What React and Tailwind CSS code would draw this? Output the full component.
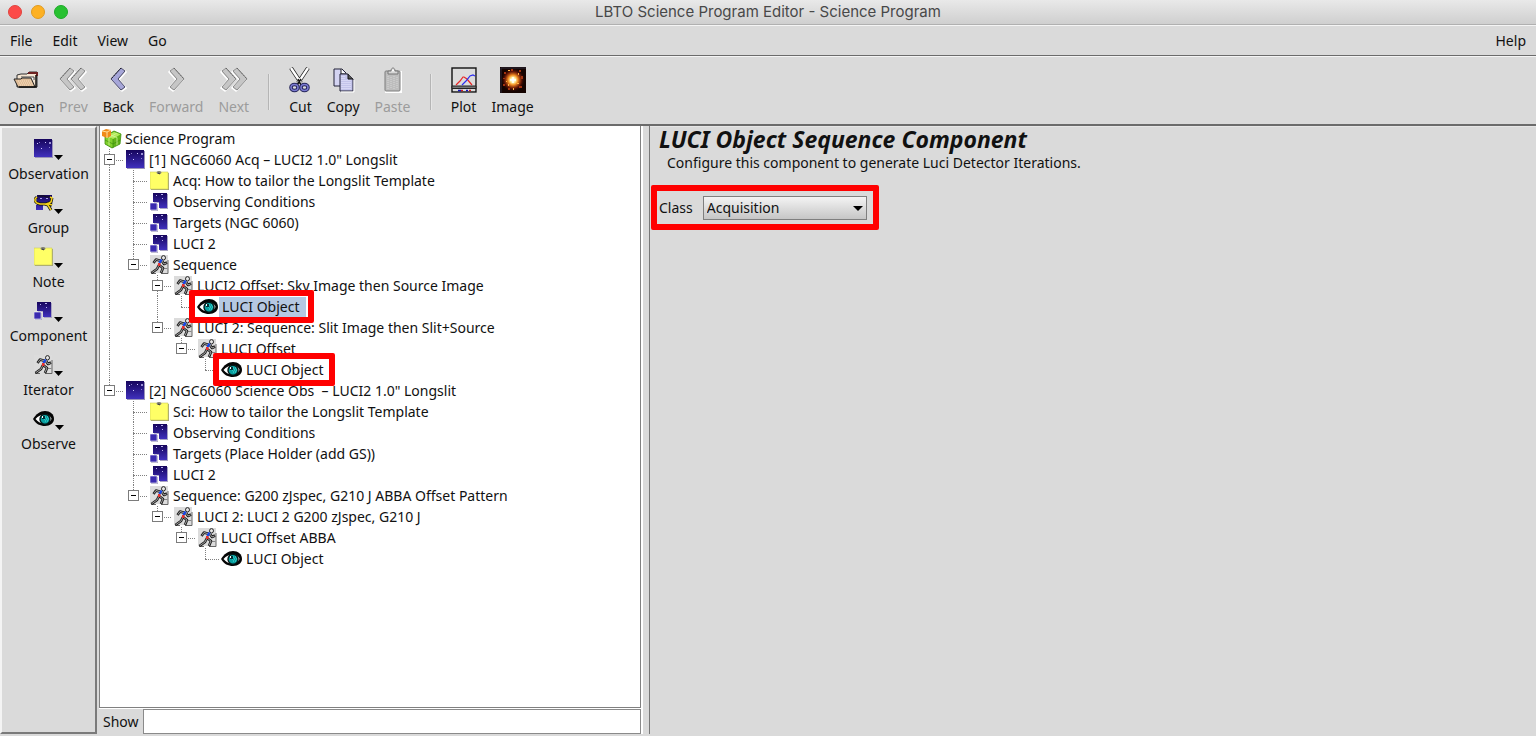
import { useState } from 'react';

const ICON_STARS = (
  <g fill="#cfc8ff">
    <rect x="3" y="4" width="1" height="1" />
    <rect x="7" y="9" width="1" height="1" />
    <rect x="11" y="3" width="1" height="1" />
    <rect x="15" y="3" width="2" height="2" opacity=".7" />
    <rect x="5" y="3" width="1" height="1" opacity=".6" />
    <rect x="15" y="8" width="1" height="1" opacity=".6" />
  </g>
);

function NavyGradient({ id }) {
  return (
    <defs>
      <linearGradient id={id} x1="0" y1="0" x2="0" y2="1">
        <stop offset="0" stopColor="#16055c" />
        <stop offset="1" stopColor="#4030bd" />
      </linearGradient>
    </defs>
  );
}

function ObservationIcon() {
  return (
    <svg width="20" height="20" viewBox="0 0 20 20" aria-hidden="true">
      <NavyGradient id="obs" />
      <rect x="1" y="1" width="18" height="18" fill="#9a94b8" />
      <rect x="0" y="0" width="18" height="18" fill="url(#obs)" />
      {ICON_STARS}
    </svg>
  );
}

function ComponentIcon() {
  return (
    <svg width="20" height="20" viewBox="0 0 20 20" aria-hidden="true">
      <NavyGradient id="cmp" />
      <path d="M4 2h14v15h-8v-6H4z" fill="#a9a4c4" />
      <path d="M3 1h14v15H9v-6H3z" fill="url(#cmp)" />
      <rect x="1" y="12" width="7" height="7" fill="#a9a4c4" />
      <rect x="0" y="11" width="7" height="7" fill="#3a2ab0" stroke="#fff" strokeWidth=".6" />
      <g fill="#b9b2f0">
        <rect x="6" y="3" width="1" height="1" />
        <rect x="11" y="2" width="2" height="1" />
        <rect x="12" y="6" width="1" height="1" />
      </g>
    </svg>
  );
}

function GroupIcon() {
  return (
    <svg width="20" height="20" viewBox="0 0 20 20" aria-hidden="true">
      <NavyGradient id="grp" />
      <path d="M3 2h15v10H3zM2 12h7v5H2z" fill="url(#grp)" />
      <path d="M3 4L1 6v2l2 2 3 1h6l3-1 2-1 1-4M11 11l3 1 3 5M10 11h5l3 1" fill="none" stroke="#111" strokeWidth="3" />
      <path d="M4 3h6l2 1h5" fill="none" stroke="#111" strokeWidth="1" />
      <path d="M3 4L1 6v2l2 2 3 1h6l3-1 2-1 1-4-2-1M11 11l3 1 3 5M10 11h5l3 1" fill="none" stroke="#f5d21c" strokeWidth="1.5" />
      <rect x="6" y="5" width="2" height="1" fill="#aaa3ea" />
      <rect x="12" y="5" width="2" height="1" fill="#aaa3ea" />
    </svg>
  );
}

function NoteIcon() {
  return (
    <svg width="20" height="20" viewBox="0 0 20 20" aria-hidden="true">
      <path d="M1 2h18v17H1z" fill="#a3a37c" />
      <path d="M0 1h18v17H0z" fill="#ffff66" stroke="#c9c95a" strokeWidth=".6" />
      <ellipse cx="9" cy="1.500" rx="2.500" ry="1.500" fill="#7d7d74" />
      <path d="M8 2l2 1" stroke="#333" />
    </svg>
  );
}

function RunnerIcon() {
  return (
    <svg width="20" height="20" viewBox="0 0 20 20" aria-hidden="true">
      <rect x="0" y="0" width="18" height="18" fill="#dcdcdc" />
      <path d="M18 5v13.500H11M1 18.500h5" fill="none" stroke="#666" />
      <path d="M13 13.500h4.500" stroke="#888" />
      <path d="M11 6L6 4.500 3.500 8M12 6l2 3 3-1.500M9 10l4 3-2 5M9 10l-2 4-5.500 4" fill="none" stroke="#1c1c1c" strokeWidth="2.600" strokeLinejoin="round" />
      <path d="M11 6L6 4.500 4 7.500M12 6l2 3 2.500-1M9 10l4 3-2 4.500M9 10l-2 4-5 3.500" fill="none" stroke="#d8d8d8" strokeWidth=".7" strokeLinejoin="round" />
      <ellipse cx="13.500" cy="2.800" rx="2" ry="2.200" fill="#e8e8e8" stroke="#222" />
      <path d="M11.500 4.500L9.500 8" stroke="#1646e8" strokeWidth="2.400" />
      <rect x="8" y="8" width="2.500" height="3" fill="#e5302c" />
    </svg>
  );
}

function EyeIcon() {
  return (
    <svg width="22" height="20" viewBox="0 0 22 20" aria-hidden="true">
      <path d="M0 10C3 5 7 2 12 2c5 0 9 3 9 8 0 4-4 7-9 7-5 0-9-2-12-7z" fill="#050505" />
      <path d="M2.500 10C5 7 8 5.500 12 5.500c3 0 6 2 6.500 4.500-1.500 3-3.500 4.500-6.500 4.500-4 0-7-1.500-9.500-4.500z" fill="#fff" />
      <circle cx="12" cy="10.200" r="5" fill="#08a0a0" stroke="#031818" strokeWidth="1.400" />
      <path d="M12 8h4M11 10h5M12 12h4" stroke="#4fe0dc" strokeDasharray="1 1" />
      <rect x="9" y="7" width="3" height="3" fill="#032f34" />
      <rect x="9" y="7" width="1" height="2" fill="#fff" />
    </svg>
  );
}

function ProgramIcon() {
  return (
    <svg width="20" height="20" viewBox="0 0 20 20" aria-hidden="true">
      <path d="M3 7l9-5 7 3-1 10-8 4-7-4z" fill="#62b519" />
      <path d="M3 7l9-4 7 2-8 5z" fill="#b4ea5c" />
      <path d="M11 10v9l-8-4V7z" fill="#80d02b" />
      <path d="M3 11l8 4 7-4M11 10v9" fill="none" stroke="#3b8c0d" strokeWidth=".7" />
      <path d="M7 5.500l8 3v8M15 4L7 8.500v8" fill="none" stroke="#d3f59a" strokeWidth=".8" />
      <path d="M3 7l9-5 7 3-1 10-8 4-7-4z" fill="none" stroke="#3f8f10" strokeWidth=".8" />
      <path d="M0 2l4-2 5 1v6L5 9 0 7z" fill="#f08a18" />
      <path d="M0 2l5 1 4-2M5 3v6" fill="none" stroke="#ffdf9a" />
    </svg>
  );
}

function FolderIcon() {
  return (
    <svg width="26" height="26" viewBox="0 0 26 26" aria-hidden="true">
      <path d="M8 7h6l2-2h8v15H4V8z" fill="#f4e5d2" stroke="#333" />
      <path d="M15 6h9v3" fill="none" stroke="#6e2222" strokeWidth="2" />
      <path d="M8 10h13v3" fill="#fff" stroke="#444" />
      <path d="M1 12h7l1-1h9l4 9H5z" fill="#dfbd98" stroke="#222" />
      <path d="M5 14h13M6 16h13M7 18h13" stroke="#f8dfc2" strokeDasharray="1 1" />
      <path d="M23 8v12H6" fill="none" stroke="#111" strokeWidth="1.500" />
    </svg>
  );
}

function Chevrons({ double, right, active }) {
  const shape = 'M1 12L11 1l4 3-7 8 7 8-4 3z';
  const width = double ? 28 : 17;
  return (
    <svg width={width} height="26" viewBox={`0 0 ${width} 26`} aria-hidden="true">
      <g transform={right ? `translate(${width} 0) scale(-1 1)` : undefined}>
        {(double ? [11, 0] : [0]).map((x) => (
          <g key={x} transform={`translate(${x} 0)`}>
            <path d={shape} transform="translate(1 1)" fill="none" stroke="#fff" strokeWidth="1.500" />
            <path d={shape} fill={active ? '#a6a6d8' : '#c6c6c6'} stroke={active ? '#4a4a66' : '#8b8b8b'} />
            <path d="M11 1L1 12" stroke={active ? '#1c1c2a' : '#666'} strokeDasharray="2 1" />
          </g>
        ))}
      </g>
    </svg>
  );
}

function CutIcon() {
  return (
    <svg width="22" height="26" viewBox="0 0 22 26" aria-hidden="true">
      <path d="M2 1l10 15M19 1L9 16" stroke="#222" strokeWidth="4" />
      <path d="M2 1l10 15M19 1L9 16" stroke="#fff" strokeWidth="2.400" />
      <path d="M9 12l3 6M12 12l-4 6" stroke="#111" strokeWidth="1.500" />
      <ellipse cx="5.500" cy="20.500" rx="3.500" ry="3" fill="#ddd" stroke="#26265a" strokeWidth="3.600" />
      <ellipse cx="15.500" cy="20.500" rx="3.500" ry="3" fill="#ddd" stroke="#26265a" strokeWidth="3.600" />
      <ellipse cx="5.500" cy="20.500" rx="3.500" ry="3" fill="none" stroke="#7a7ad0" strokeWidth="1.600" />
      <ellipse cx="15.500" cy="20.500" rx="3.500" ry="3" fill="none" stroke="#7a7ad0" strokeWidth="1.600" />
    </svg>
  );
}

function CopyIcon() {
  return (
    <svg width="24" height="26" viewBox="0 0 24 26" aria-hidden="true">
      <path d="M3 2h8l4 4v13H3z" fill="#d4d4f2" stroke="#222238" />
      <path d="M10 2v5h5" fill="#fff" stroke="#222" />
      <path d="M9 7h8l5 5v12H9z" fill="#c4c4ea" stroke="#222238" />
      <path d="M11 9v13M13 9v13M15 13v9M17 13v9M19 13v9" stroke="#e9e9ff" strokeDasharray="1 1" />
      <path d="M17 7v5h5" fill="#555" stroke="#111" />
      <path d="M23 13v12H10" fill="none" stroke="#fff" />
    </svg>
  );
}

function PasteIcon() {
  return (
    <svg width="20" height="26" viewBox="0 0 20 26" aria-hidden="true">
      <path d="M3 5h15v20H3z" fill="none" stroke="#fff" strokeWidth="2" />
      <rect x="2" y="4" width="15" height="20" rx="1" fill="#bdbdbd" stroke="#7d7d7d" />
      <path d="M5 9v13M8 10v12M11 9v13M14 10v12" stroke="#d7d7d7" strokeDasharray="1 1" />
      <path d="M5 7V4h3c0-4 4-4 4 0h3v3z" fill="#d6d6d6" stroke="#777" />
      <circle cx="10" cy="3.500" r="1" fill="#fff" />
    </svg>
  );
}

function PlotIcon() {
  return (
    <svg width="26" height="28" viewBox="0 0 26 28" aria-hidden="true">
      <path d="M25.500 2v24.500H1" fill="none" stroke="#fff" />
      <rect x="1" y="2" width="24" height="24" fill="#dcdcdc" stroke="#111" strokeWidth="1.400" />
      <path d="M1 20h24v2.500H1z" fill="#777" stroke="#222" />
      <path d="M5 19l4-4 3-4h1l3 2 5 6" fill="none" stroke="#e92525" strokeWidth="1.200" />
      <path d="M11 19l4-4 4-5 3-1 2 1" fill="none" stroke="#2d2df0" strokeWidth="1.200" />
      <path d="M7 24.500h3M15 24.500h2" stroke="#1515c0" strokeWidth="1.500" />
      <path d="M10 24.500h2M18 24.500h2" stroke="#d02020" strokeWidth="1.500" />
    </svg>
  );
}

function ImageIcon() {
  return (
    <svg width="28" height="28" viewBox="0 0 28 28" aria-hidden="true">
      <defs>
        <radialGradient id="glow">
          <stop offset="0" stopColor="#fff" />
          <stop offset=".22" stopColor="#fff3a0" />
          <stop offset=".42" stopColor="#f08a20" />
          <stop offset=".7" stopColor="#7c1c08" stopOpacity=".8" />
          <stop offset="1" stopColor="#1c0400" stopOpacity="0" />
        </radialGradient>
      </defs>
      <rect x="1" y="1" width="26" height="26" fill="#150300" />
      <circle cx="14" cy="14" r="12" fill="url(#glow)" />
      <g fill="#a3330f">
        <rect x="5" y="6" width="2" height="2" /><rect x="20" y="4" width="2" height="2" />
        <rect x="22" y="10" width="2" height="3" /><rect x="4" y="18" width="2" height="2" />
        <rect x="20" y="20" width="3" height="2" /><rect x="9" y="22" width="2" height="2" />
        <rect x="4" y="12" width="2" height="1" /><rect x="12" y="3" width="2" height="2" />
      </g>
      <g fill="#ffb347">
        <rect x="9" y="4" width="2" height="1" /><rect x="19" y="7" width="1" height="2" />
        <rect x="7" y="15" width="1" height="1" /><rect x="14" y="22" width="1" height="2" />
        <rect x="18" y="17" width="2" height="1" /><rect x="9" y="18" width="1" height="2" />
      </g>
      <path d="M14 11v6M11 14h6" stroke="#fff" strokeWidth="1.500" />
      <path d="M2 27V2h25" fill="none" stroke="#2b2b3a" />
    </svg>
  );
}

const ICONS = {
  program: ProgramIcon,
  observation: ObservationIcon,
  group: GroupIcon,
  note: NoteIcon,
  component: ComponentIcon,
  iterator: RunnerIcon,
  observe: EyeIcon,
};

const PROGRAM = {
  icon: 'program',
  label: 'Science Program',
  children: [
    {
      icon: 'observation',
      label: '[1] NGC6060 Acq – LUCI2 1.0" Longslit',
      children: [
        { icon: 'note', label: 'Acq: How to tailor the Longslit Template' },
        { icon: 'component', label: 'Observing Conditions' },
        { icon: 'component', label: 'Targets (NGC 6060)' },
        { icon: 'component', label: 'LUCI 2' },
        {
          icon: 'iterator',
          label: 'Sequence',
          children: [
            {
              icon: 'iterator',
              label: 'LUCI2 Offset: Sky Image then Source Image',
              children: [{ icon: 'observe', label: 'LUCI Object', selected: true, marked: true }],
            },
            {
              icon: 'iterator',
              label: 'LUCI 2: Sequence: Slit Image then Slit+Source',
              children: [
                {
                  icon: 'iterator',
                  label: 'LUCI Offset',
                  children: [{ icon: 'observe', label: 'LUCI Object', marked: true }],
                },
              ],
            },
          ],
        },
      ],
    },
    {
      icon: 'observation',
      label: '[2] NGC6060 Science Obs  – LUCI2 1.0" Longslit',
      children: [
        { icon: 'note', label: 'Sci: How to tailor the Longslit Template' },
        { icon: 'component', label: 'Observing Conditions' },
        { icon: 'component', label: 'Targets (Place Holder (add GS))' },
        { icon: 'component', label: 'LUCI 2' },
        {
          icon: 'iterator',
          label: 'Sequence: G200 zJspec, G210 J ABBA Offset Pattern',
          children: [
            {
              icon: 'iterator',
              label: 'LUCI 2: LUCI 2 G200 zJspec, G210 J',
              children: [
                {
                  icon: 'iterator',
                  label: 'LUCI Offset ABBA',
                  children: [{ icon: 'observe', label: 'LUCI Object' }],
                },
              ],
            },
          ],
        },
      ],
    },
  ],
};

function Guide({ line, branch, onToggle, open, label }) {
  return (
    <span className="relative block h-full w-6 shrink-0">
      {line !== 'none' && (
        <span className={`absolute left-2 top-0 border-l border-dotted border-[#808080] ${line === 'half' ? 'h-1/2' : 'h-full'}`} />
      )}
      {branch && <span className="absolute left-2 top-1/2 w-3.5 border-t border-dotted border-[#808080]" />}
      {onToggle && (
        <button
          type="button"
          onClick={onToggle}
          aria-label={`${open ? 'Collapse' : 'Expand'} ${label}`}
          className="absolute left-[3px] top-[5px] flex size-[11px] items-center justify-center border border-[#7c7c7c] bg-white"
        >
          <span className="h-px w-[5px] bg-black" />
        </button>
      )}
    </span>
  );
}

function TreeNode({ node, guides = [], last = true, root = false }) {
  const [open, setOpen] = useState(true);
  const Icon = ICONS[node.icon];
  const childGuides = root ? [] : [...guides, !last];
  const eye = node.icon === 'observe';
  return (
    <li>
      <div className="flex h-[21px] items-center">
        {guides.map((line, i) => (
          <Guide key={i} line={line ? 'full' : 'none'} />
        ))}
        {!root && (
          <Guide
            line={last ? 'half' : 'full'}
            branch
            open={open}
            label={node.label}
            onToggle={node.children ? () => setOpen(!open) : undefined}
          />
        )}
        <span className="relative flex h-full items-center">
          <span className={`flex h-full shrink-0 items-end ${eye ? 'w-[22px]' : 'w-6 pl-px'}`}>
            <Icon />
          </span>
          <span className={`whitespace-pre ${eye ? 'px-[3px]' : ''} ${node.selected ? 'bg-[#b5c8e2] pr-1.5' : ''}`}>{node.label}</span>
          {node.marked && <span className="pointer-events-none absolute -inset-x-2 -inset-y-1.5 z-10 rounded-xs border-[6px] border-[#ff0000]" />}
        </span>
      </div>
      {node.children && open && (
        <ul>
          {node.children.map((child, i) => (
            <TreeNode key={i} node={child} guides={childGuides} last={i === node.children.length - 1} />
          ))}
        </ul>
      )}
    </li>
  );
}

function ToolButton({ icon, label, disabled }) {
  return (
    <button type="button" disabled={disabled} className="flex flex-col items-center gap-[3px] disabled:text-[#9c9c9c]">
      <span className="flex h-7 items-center">{icon}</span>
      <span className="leading-5">{label}</span>
    </button>
  );
}

function Divider() {
  return <span className="mx-1 mt-2 h-9 w-0.5 border-l border-[#b5b5b5] bg-[#e6e6e6]" />;
}

const PALETTE = [
  ['observation', 'Observation'],
  ['group', 'Group'],
  ['note', 'Note'],
  ['component', 'Component'],
  ['iterator', 'Iterator'],
  ['observe', 'Observe'],
];

export default function App() {
  const [value, setValue] = useState('Acquisition');
  return (
    <div className="flex min-h-screen flex-col bg-[#dadada] font-['Noto_Sans',sans-serif] text-[14px] leading-5 text-[#111]">
      <header className="relative flex h-[25px] items-center border-b border-[#b0b0b0] bg-linear-to-b from-[#e9e9e9] to-[#cfcfcf]">
        <div className="absolute left-2 flex gap-[9px]">
          <button type="button" aria-label="Close" className="size-3.5 rounded-full border border-[#e0443e] bg-[#fc4a48]" />
          <button type="button" aria-label="Minimize" className="size-3.5 rounded-full border border-[#e19b20] bg-[#fdb124]" />
          <button type="button" aria-label="Zoom" className="size-3.5 rounded-full border border-[#1faa2a] bg-[#28c131]" />
        </div>
        <h1 className="flex-1 text-center font-['Inter',sans-serif] text-[15px] text-[#484848]">LBTO Science Program Editor - Science Program</h1>
      </header>

      <nav className="flex h-[31px] items-center gap-5 border-b border-t border-b-[#6b6b6b] border-t-[#f4f4f4] px-2.5">
        <button type="button">File</button>
        <button type="button">Edit</button>
        <button type="button">View</button>
        <button type="button">Go</button>
        <button type="button" className="ml-auto">Help</button>
      </nav>

      <div className="flex h-[70px] items-start gap-[15px] border-b-2 border-t border-b-[#6b6b6b] border-t-[#f4f4f4] px-2 pt-[9px]">
        <ToolButton icon={<FolderIcon />} label="Open" />
        <ToolButton icon={<Chevrons double />} label="Prev" disabled />
        <ToolButton icon={<Chevrons active />} label="Back" />
        <ToolButton icon={<Chevrons right />} label="Forward" disabled />
        <ToolButton icon={<Chevrons double right />} label="Next" disabled />
        <Divider />
        <ToolButton icon={<CutIcon />} label="Cut" />
        <ToolButton icon={<CopyIcon />} label="Copy" />
        <ToolButton icon={<PasteIcon />} label="Paste" disabled />
        <Divider />
        <ToolButton icon={<PlotIcon />} label="Plot" />
        <ToolButton icon={<ImageIcon />} label="Image" />
      </div>

      <div className="flex flex-1 pb-0.5">
        <aside className="mr-0.5 flex w-[97px] shrink-0 flex-col items-center gap-1.5 border-2 border-b-[#7a7a7a] border-l-[#f4f4f4] border-r-[#7a7a7a] border-t-[#f4f4f4] pt-2">
          {PALETTE.map(([key, label]) => {
            const Icon = ICONS[key];
            return (
              <button key={key} type="button" className="flex flex-col items-center gap-0.5">
                <span className="flex h-[26px] items-center">
                  <Icon />
                  <svg width="9" height="5" viewBox="0 0 9 5" className="mt-4" aria-hidden="true">
                    <path d="M0 0h9L4.500 5z" fill="#000" />
                  </svg>
                </span>
                <span>{label}</span>
              </button>
            );
          })}
        </aside>

        <section className="flex w-[542px] shrink-0 flex-col">
          <div className="flex-1 border border-t-0 border-[#808080] bg-white pl-px pt-0.5">
            <ul>
              <TreeNode node={PROGRAM} root />
            </ul>
          </div>
          <div className="flex h-[26px] items-stretch border-t border-white">
            <label htmlFor="show" className="flex items-center px-1">Show</label>
            <input id="show" type="text" className="min-w-0 flex-1 border border-[#8a8a8a] bg-white px-1 outline-none" />
          </div>
        </section>

        <div className="w-[9px] shrink-0 border-l-2 border-r border-l-white border-r-[#777]" />

        <main className="min-w-0 flex-1 border-t border-[#e6e6e6] pl-[9px]">
          <h2 className="text-[23px] font-bold italic leading-6">LUCI Object Sequence Component</h2>
          <p className="mt-0.5 pl-2">Configure this component to generate Luci Detector Iterations.</p>
          <div className="-ml-2 mt-3 inline-flex h-[45px] items-center gap-2.5 rounded-xs border-[6px] border-[#ff0000] pl-0.5 pr-1.5">
            <label htmlFor="class">Class</label>
            <span className="relative flex">
              <select
                id="class"
                value={value}
                onChange={(e) => setValue(e.target.value)}
                className="h-6 w-[164px] appearance-none border border-[#7f7f7f] bg-linear-to-b from-[#f4f4f4] to-[#c6c6c6] pl-[3px] outline-none"
              >
                <option>Acquisition</option>
                <option>Science</option>
              </select>
              <svg width="10" height="5" viewBox="0 0 10 5" className="pointer-events-none absolute right-1 top-2.5" aria-hidden="true">
                <path d="M0 0h10L5 5z" fill="#000" />
              </svg>
            </span>
          </div>
        </main>
      </div>
    </div>
  );
}
